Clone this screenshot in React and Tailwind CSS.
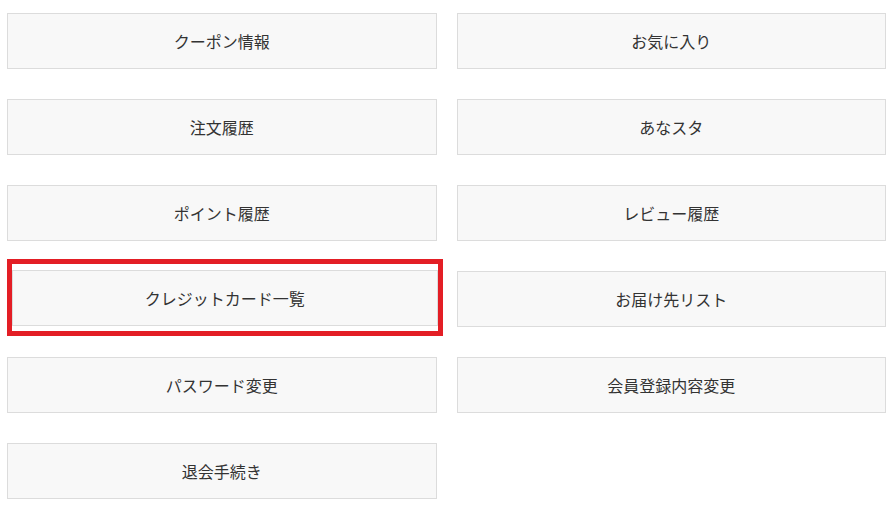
import React from "react";

const ITEMS = [
  "クーポン情報",
  "お気に入り",
  "注文履歴",
  "あなスタ",
  "ポイント履歴",
  "レビュー履歴",
  "クレジットカード一覧",
  "お届け先リスト",
  "パスワード変更",
  "会員登録内容変更",
  "退会手続き",
];

const HIGHLIGHT = "クレジットカード一覧";

function MenuButton({ label }) {
  return (
    <button
      type="button"
      className="w-full h-[56px] flex items-center justify-center bg-[#f8f8f8] border border-[#dcdcdc] text-[#333] text-[16px]"
    >
      {label}
    </button>
  );
}

export default function App() {
  return (
    <div
      className="w-[895px] h-[505px] bg-white overflow-hidden pt-[13px] pl-[7px] pr-[9px]"
      style={{ fontFamily: '"Noto Sans CJK JP", "Noto Sans", sans-serif' }}
    >
      <div className="grid grid-cols-2 gap-x-[20px] gap-y-[30px]">
        {ITEMS.map((label) =>
          label === HIGHLIGHT ? (
            <div
              key={label}
              className="self-start h-[77px] -mt-[12px] -mb-[9px] -mr-[6px] border-[5px] border-[#e31e25] pt-[6px]"
            >
              <MenuButton label={label} />
            </div>
          ) : (
            <MenuButton key={label} label={label} />
          )
        )}
      </div>
    </div>
  );
}
